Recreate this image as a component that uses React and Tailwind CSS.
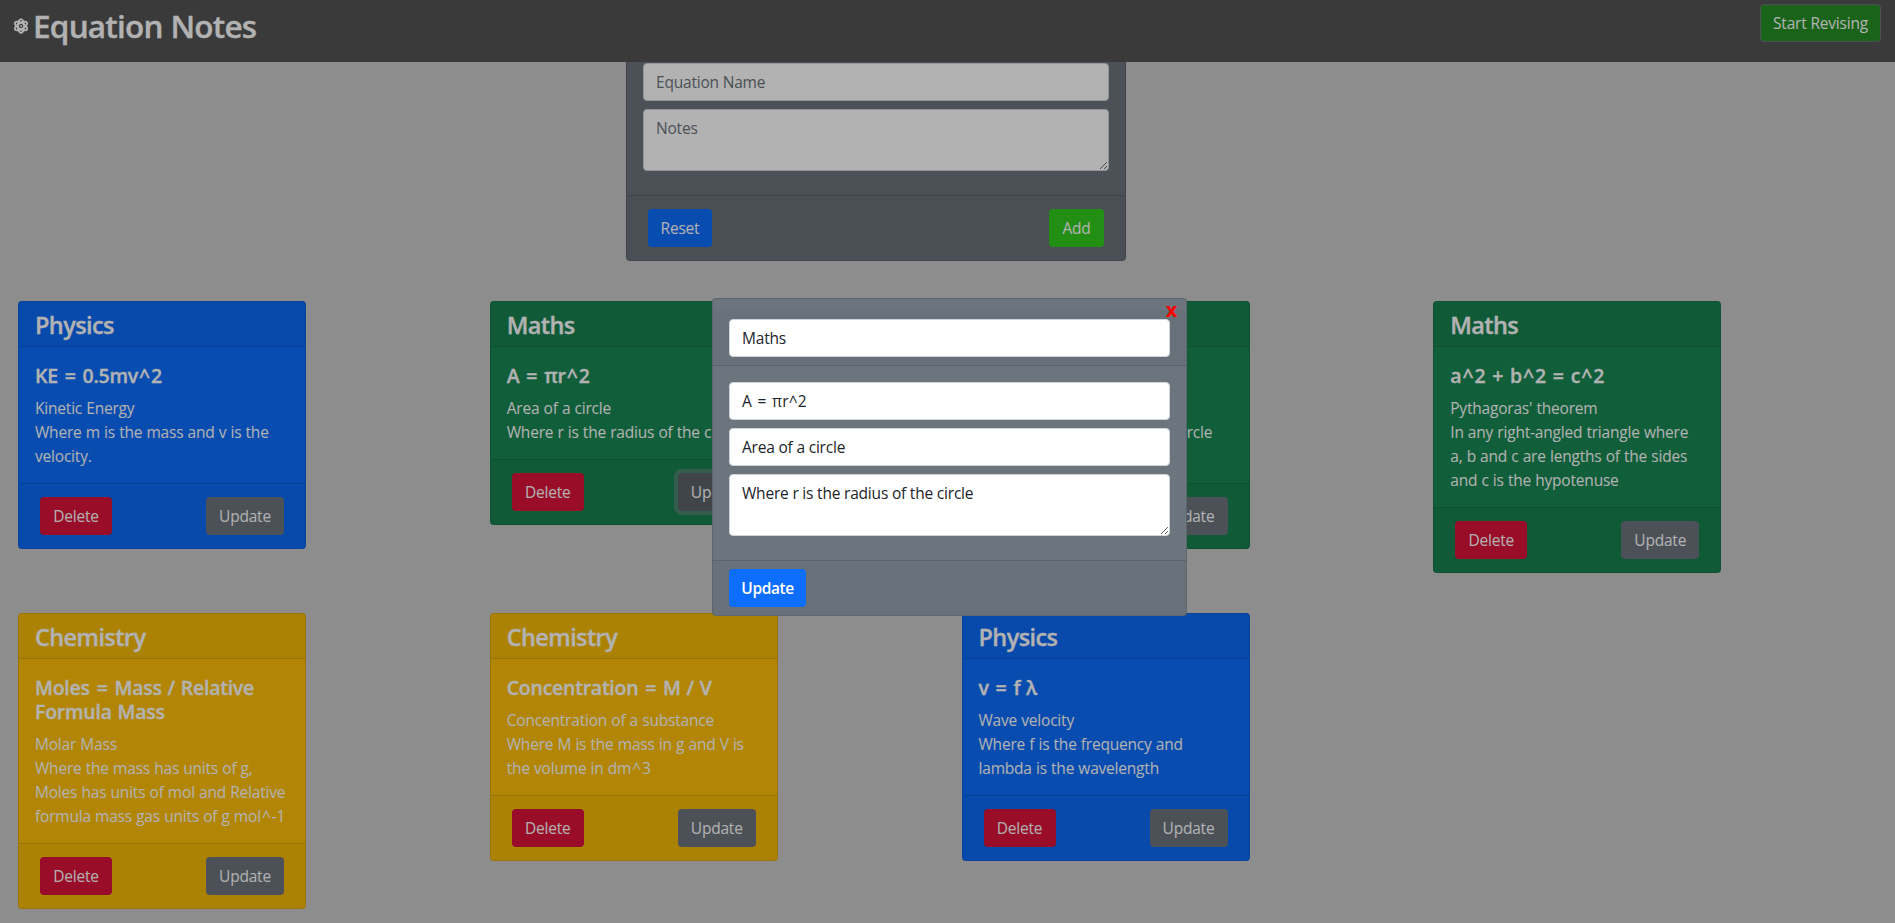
import React from "react";

const cards = [
  { s: "Physics", e: ["KE = 0.5mv^2"], n: "Kinetic Energy", d: ["Where m is the mass and v is the", "velocity."] },
  { s: "Maths", e: ["A = πr^2"], n: "Area of a circle", d: ["Where r is the radius of the circle"], focus: true },
  { s: "Maths", e: ["C = 2πr"], n: "Circumference", d: ["Where r is the radius of the circle", "and C is its length"] },
  { s: "Maths", e: ["a^2 + b^2 = c^2"], n: "Pythagoras' theorem", d: ["In any right-angled triangle where", "a, b and c are lengths of the sides", "and c is the hypotenuse"] },
  { s: "Chemistry", e: ["Moles = Mass / Relative", "Formula Mass"], n: "Molar Mass", d: ["Where the mass has units of g,", "Moles has units of mol and Relative", "formula mass gas units of g mol^-1"] },
  { s: "Chemistry", e: ["Concentration = M / V"], n: "Concentration of a substance", d: ["Where M is the mass in g and V is", "the volume in dm^3"] },
  { s: "Physics", e: ["v = f λ"], n: "Wave velocity", d: ["Where f is the frequency and", "lambda is the wavelength"] },
];

const tones = { Physics: "bg-[#0d6efd]", Maths: "bg-[#198754]", Chemistry: "bg-[#ffc107]" };

const btn = "h-[38px] rounded border border-transparent px-0 text-center text-white leading-[36px] whitespace-nowrap";
const field = "block w-full h-[38px] rounded border border-[#ced4da] bg-white px-3 text-[#212529] placeholder:text-[#6c757d] placeholder:opacity-100";
const area = "block w-full h-[62px] resize-y rounded border border-[#ced4da] bg-white px-3 py-1.5 leading-6 text-[#212529] placeholder:text-[#6c757d] placeholder:opacity-100";

// Gives math operators a little side bearing.
function MathText({ children }) {
  return children.split(/([=+^])/).map((part, i) =>
    i % 2 ? <span key={i} className="px-[1.1px]">{part}</span> : part
  );
}

function Atom() {
  return (
    <svg viewBox="0 0 16 16" className="mr-1 h-4 w-4" fill="none" stroke="currentColor" strokeWidth="1.9">
      <ellipse cx="8" cy="8" rx="3.1" ry="6.9" />
      <ellipse cx="8" cy="8" rx="3.1" ry="6.9" transform="rotate(60 8 8)" />
      <ellipse cx="8" cy="8" rx="3.1" ry="6.9" transform="rotate(120 8 8)" />
      <circle cx="8" cy="8" r="1" fill="currentColor" stroke="none" />
    </svg>
  );
}

function Card({ c }) {
  return (
    <div className={`w-72 rounded border border-black/[0.125] text-white ${tones[c.s]}`}>
      <div className="border-b border-black/[0.125] bg-black/[0.03] px-4 pb-[7px] pt-[9px]">
        <h4 className="text-[23.5px] font-semibold leading-7 tracking-[-0.6px] [-webkit-text-stroke:0.3px]">{c.s}</h4>
      </div>
      <div className="px-4 pb-[15px] pt-[17px]">
        <h5 className="mb-2 text-[19.5px] font-semibold leading-6 tracking-[-0.25px] [word-spacing:1px] [-webkit-text-stroke:0.3px]">
          {c.e.map((line) => (
            <span key={line} className="block whitespace-nowrap"><MathText>{line}</MathText></span>
          ))}
        </h5>
        <p>{c.n}</p>
        {c.d.map((line) => (
          <p key={line} className="whitespace-nowrap"><MathText>{line}</MathText></p>
        ))}
      </div>
      <div className="flex justify-between border-t border-black/[0.125] bg-black/[0.03] px-[21px] py-[13px]">
        <button className={`${btn} w-[72px] bg-[#dc143c]`}>Delete</button>
        <button className={`${btn} w-[78px] ${c.focus ? "bg-[#5c636a] ring-4 ring-[#828a91]/50" : "bg-[#6c757d]"}`}>Update</button>
      </div>
    </div>
  );
}

export default function App() {
  return (
    <div className="relative flex h-[923px] w-full flex-col overflow-hidden bg-[#cbcbcb] font-['Open_Sans',sans-serif] text-[15.5px] leading-6 tracking-[-0.2px] [word-spacing:0.35px]">
      <header className="relative z-10 flex h-[62px] shrink-0 items-start justify-between bg-[#545454] pl-[13px] pr-[14px] text-white">
        <div className="flex items-center pt-[7px]">
          <Atom />
          <h1 className="text-[31.5px] font-semibold leading-[38.4px] tracking-[-0.78px] [-webkit-text-stroke:0.3px]">Equation Notes</h1>
        </div>
        <button className={`${btn} mt-1 w-[121px] border-[#6c757d]! bg-[#249024]`}>Start Revising</button>
      </header>

      <main className="flex flex-col">
        <section className="-mt-px ml-[626px] w-[500px] rounded-b border border-t-0 border-black/[0.125] bg-[#6c757d]">
          <div className="flex flex-col gap-2 px-4 pb-6 pt-0.5">
            <input className={field} placeholder="Equation Name" />
            <textarea className={area} placeholder="Notes" />
          </div>
          <div className="flex justify-between border-t border-black/[0.125] bg-[#6b707a] px-[21px] py-[13px]">
            <button className={`${btn} w-16 bg-[#0d6efd]`}>Reset</button>
            <button className={`${btn} w-[55px] bg-[#32cd1e]`}>Add</button>
          </div>
        </section>

        <section className="ml-[18px] mt-10 grid grid-cols-[repeat(4,471.75px)] items-start gap-y-10">
          {cards.map((c, i) => (
            <Card key={i} c={c} />
          ))}
        </section>
      </main>

      <div className="absolute inset-0 z-20 bg-black/30" />

      <div className="absolute left-[712px] top-[298px] z-30 w-[475px] rounded border border-black/[0.125] bg-[#6c757d]">
        <div className="h-3" />
        <button className="absolute right-[9px] top-0 text-base font-extrabold leading-6 text-[#ff0000]">X</button>
        <div className="border-b border-black/[0.125] bg-black/[0.03] px-4 py-2">
          <input className={field} defaultValue="Maths" />
        </div>
        <div className="flex flex-col gap-2 px-4 pb-6 pt-4">
          <input className={`${field} tracking-[0.1px] [word-spacing:1.5px]`} defaultValue="A = πr^2" />
          <input className={field} defaultValue="Area of a circle" />
          <textarea className={area} defaultValue="Where r is the radius of the circle" />
        </div>
        <div className="border-t border-black/[0.125] bg-black/[0.03] px-4 py-2">
          <button className={`${btn} w-[77px] bg-[#0d6efd] font-semibold tracking-[-0.4px]`}>Update</button>
        </div>
      </div>
    </div>
  );
}
